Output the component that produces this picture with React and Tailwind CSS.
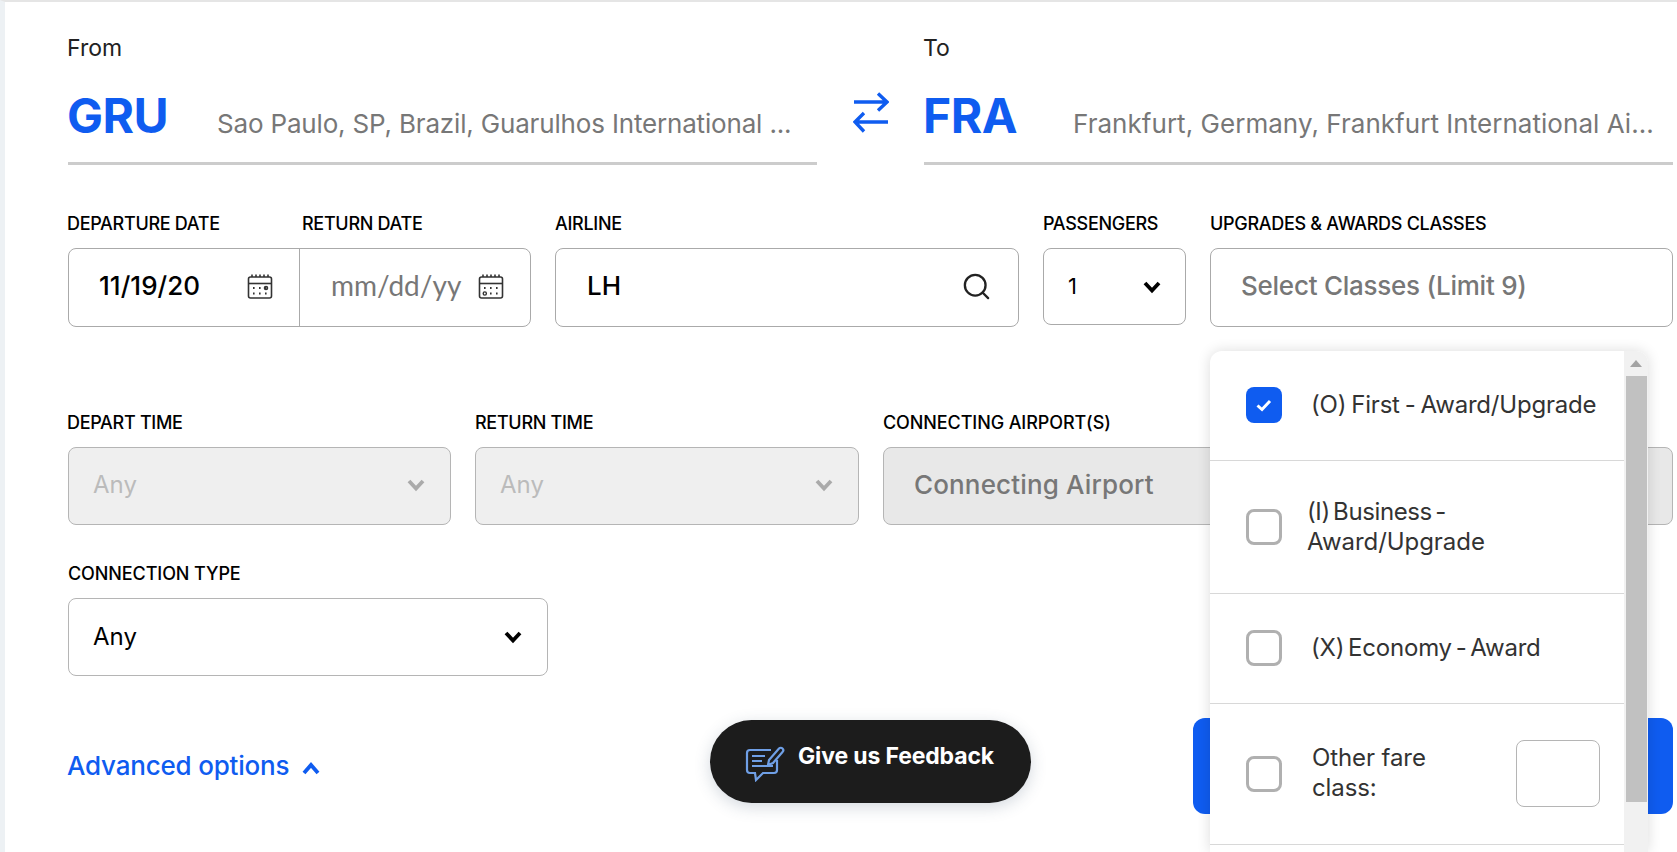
import { Search } from 'lucide-react'

function Chevron({ className = '', up = false }) {
  return (
    <svg width="18" height="14" viewBox="0 0 18 14" fill="none" className={className}>
      <path d={up ? 'M2 12L9 4L16 12' : 'M2 3L9 10.5L16 3'} stroke="currentColor" strokeWidth="3.8" />
    </svg>
  )
}

function CalendarIcon({ dot = 'right' }) {
  return (
    <svg width="26" height="26" viewBox="0 0 26 26" fill="none" stroke="#333" className="shrink-0">
      <rect x="1.5" y="4" width="23" height="21" rx="2" strokeWidth="1.6" />
      <path d="M1.5 10.5H24.5" strokeWidth="1.6" />
      <path d="M5 4V1.5M9 4V1.5M13 4V1.5M17 4V1.5M21 4V1.5" strokeWidth="1.6" />
      <path d="M6 15H7.6M12 15H13.6M18 15H19.6M12 20.5H13.6M18 20.5H19.6" strokeWidth="1.8" />
      {dot === 'right' ? (
        <>
          <path d="M6 20.5H7.6" strokeWidth="1.8" />
          <circle cx="19" cy="15" r="1.6" strokeWidth="1.4" />
        </>
      ) : (
        <circle cx="6.8" cy="20.5" r="1.6" strokeWidth="1.4" />
      )}
    </svg>
  )
}

function FieldLabel({ children, className = 'tracking-[-0.3px]' }) {
  return <div className={`h-6 text-[18px] leading-6 font-medium text-black whitespace-nowrap ${className}`}>{children}</div>
}

function AirportField({ label, code, name, nameClass, className }) {
  return (
    <div className={className}>
      <div className="h-6 text-[23px] leading-6 text-[#222] -ml-px">{label}</div>
      <div className="mt-8 h-[73px] flex items-baseline border-b-[3px] border-[#cccccc]">
        <span className="w-[150px] text-[48px] leading-[48px] font-bold text-[#0f5cf0] tracking-[-0.5px] -ml-px">{code}</span>
        <span className={`text-[26px] text-[#777777] whitespace-nowrap ${nameClass}`}>{name}</span>
      </div>
    </div>
  )
}

function ClassRow({ checked, textClass, className, children, extra }) {
  return (
    <div className={`flex items-center pl-9 border-b border-[#d8d8d8] ${className}`}>
      <div className={`w-9 h-9 shrink-0 rounded-lg flex items-center justify-center ${checked ? 'bg-[#0f5cf0]' : 'border-[3px] border-[#b0b0b0]'}`}>
        {checked && (
          <svg width="18" height="14" viewBox="0 0 18 14" fill="none">
            <path d="M2.5 7.5L7 11.5L15 3" stroke="white" strokeWidth="3" />
          </svg>
        )}
      </div>
      <div className={`text-[24px] leading-[30px] text-[#333333] ${textClass}`}>{children}</div>
      {extra}
    </div>
  )
}

export default function App() {
  return (
    <div className="relative h-[852px] overflow-hidden bg-white border-t-2 border-t-[#e5e5e5] border-l-[5px] border-l-[#edf1f4] pl-[63px] pr-1 pt-[34px] font-['Inter',sans-serif]">
      {/* From / To */}
      <div className="flex">
        <AirportField
          label="From"
          code="GRU"
          name="Sao Paulo, SP, Brazil, Guarulhos International ..."
          nameClass="tracking-[-0.17px]"
          className="w-[749px]"
        />
        <div className="w-[107px] flex justify-center pt-[56px]">
          <svg width="36" height="41" viewBox="0 0 36 41" fill="none" stroke="#0f5cf0" strokeWidth="3.4">
            <path d="M1 10H34M25 1.5L34 10L25 18.5" />
            <path d="M35 30H2M11 21L2 30L11 39.5" />
          </svg>
        </div>
        <AirportField
          label="To"
          code="FRA"
          name="Frankfurt, Germany, Frankfurt International Ai..."
          nameClass="tracking-[0.04px]"
          className="w-[749px]"
        />
      </div>

      {/* Dates, airline, passengers, classes */}
      <div className="mt-[47px] flex gap-6">
        <div className="w-[463px]">
          <div className="flex">
            <div className="w-[234px]"><FieldLabel className="-ml-px tracking-[-0.3px]">DEPARTURE DATE</FieldLabel></div>
            <FieldLabel>RETURN DATE</FieldLabel>
          </div>
          <div className="mt-3 h-[79px] flex border border-[#aaaaaa] rounded-lg">
            <div className="w-[231px] flex items-center justify-between pl-[30px] pr-[26px] pb-[3px] border-r border-[#aaaaaa]">
              <span className="text-[26px] font-medium text-black tracking-[0.05px] -mt-0.5">11/19/20</span>
              <CalendarIcon dot="right" />
            </div>
            <div className="flex-1 flex items-center justify-between pl-[31px] pr-[26px] pb-[3px]">
              <span className="text-[28px] font-['Lato',sans-serif] text-[#777777] -mt-0.5">mm/dd/yy</span>
              <CalendarIcon dot="left" />
            </div>
          </div>
        </div>

        <div className="w-[464px]">
          <FieldLabel>AIRLINE</FieldLabel>
          <div className="mt-3 h-[79px] flex items-center justify-between pl-[31px] pr-[26px] pb-[3px] border border-[#aaaaaa] rounded-lg">
            <span className="text-[26px] font-medium text-black -mt-0.5">LH</span>
            <Search size={31} strokeWidth={1.8} className="text-[#222]" />
          </div>
        </div>

        <div className="w-[143px]">
          <FieldLabel>PASSENGERS</FieldLabel>
          <div className="mt-3 h-[77px] flex items-center justify-between pl-6 pr-6 border border-[#aaaaaa] rounded-lg">
            <span className="text-[22px] text-black">1</span>
            <Chevron className="text-black" />
          </div>
        </div>

        <div className="w-[463px]">
          <FieldLabel>UPGRADES &amp; AWARDS CLASSES</FieldLabel>
          <div className="relative mt-3 h-[79px] flex items-center pl-[30px] pb-[5px] border border-[#aaaaaa] rounded-lg">
            <span className="text-[26px] font-medium text-[#777777] tracking-[-0.25px]">Select Classes (Limit 9)</span>

            {/* Open classes dropdown */}
            <div className="absolute z-10 left-[-1px] top-[102px] w-[438px] h-[501px] flex bg-white rounded-t-xl overflow-hidden shadow-[0_0_14px_rgba(0,0,0,0.14)]">
              <div className="flex-1 min-w-0">
                <ClassRow checked className="h-[110px] pb-px" textClass="ml-[29px] whitespace-nowrap tracking-[-0.2px] [word-spacing:-1.6px]">(O) First - Award/Upgrade</ClassRow>
                <ClassRow className="h-[133px]" textClass="ml-[25px] -mt-px">
                  <span className="tracking-[-0.4px] [word-spacing:-3px]">(I) Business -</span><br />
                  <span className="tracking-[-0.05px]">Award/Upgrade</span>
                </ClassRow>
                <ClassRow className="h-[110px] pb-0.5" textClass="ml-[29px] tracking-[-0.2px] [word-spacing:-2.8px]">(X) Economy - Award</ClassRow>
                <ClassRow
                  className="h-[141px]"
                  textClass="ml-[30px] -mt-0.5 tracking-[-0.1px]"
                  extra={<div className="ml-auto mr-6 mb-px w-[84px] h-[67px] border border-[#b5b5b5] rounded-lg" />}
                >
                  Other fare<br />class:
                </ClassRow>
              </div>
              <div className="w-6 bg-[#f1f1f1]">
                <div className="h-[25px] flex items-center justify-center">
                  <div className="w-0 h-0 border-x-[6px] border-x-transparent border-b-[7px] border-b-[#a3a3a3]" />
                </div>
                <div className="ml-0.5 mr-px h-[426px] bg-[#c1c1c1]" />
              </div>
            </div>
          </div>
        </div>
      </div>

      {/* Times and connecting airport */}
      <div className="mt-[84px] flex gap-6">
        <div className="w-[383px]">
          <FieldLabel className="-ml-px tracking-[-0.3px]">DEPART TIME</FieldLabel>
          <div className="mt-3 h-[78px] flex items-center justify-between pl-6 pr-[25px] pb-0.5 bg-[#efefef] border border-[#b5b5b5] rounded-lg">
            <span className="text-[24px] text-[#bbbbbb]">Any</span>
            <Chevron className="text-[#aaaaaa]" />
          </div>
        </div>
        <div className="w-[384px]">
          <FieldLabel>RETURN TIME</FieldLabel>
          <div className="mt-3 h-[78px] flex items-center justify-between pl-6 pr-[25px] pb-0.5 bg-[#efefef] border border-[#b5b5b5] rounded-lg">
            <span className="text-[24px] text-[#bbbbbb]">Any</span>
            <Chevron className="text-[#aaaaaa]" />
          </div>
        </div>
        <div className="w-[790px]">
          <FieldLabel className="tracking-[-0.1px]">CONNECTING AIRPORT(S)</FieldLabel>
          <div className="mt-3 h-[78px] flex items-center pl-[30px] pb-1 bg-[#e8e8e8] border border-[#b5b5b5] rounded-lg">
            <span className="text-[26px] font-medium text-[#777777] tracking-[0.15px]">Connecting Airport</span>
          </div>
        </div>
      </div>

      {/* Connection type */}
      <div className="mt-[37px] w-[480px]">
        <FieldLabel className="tracking-[-0.1px]">CONNECTION TYPE</FieldLabel>
        <div className="mt-3 h-[78px] flex items-center justify-between pl-6 pr-[25px] border border-[#b5b5b5] rounded-lg">
          <span className="text-[24px] text-black">Any</span>
          <Chevron className="text-black" />
        </div>
      </div>

      {/* Advanced options and search */}
      <div className="mt-[42px] flex items-center justify-between">
        <div className="flex items-center gap-[13px]">
          <span className="text-[26px] font-medium text-[#0f5cf0] tracking-[-0.2px] -ml-px -mt-0.5">Advanced options</span>
          <Chevron up className="text-[#0f5cf0] mt-1" />
        </div>
        <button className="w-[480px] h-[96px] bg-[#0f5cf0] rounded-xl" />
      </div>

      {/* Floating feedback button */}
      <div className="absolute z-20 left-[705px] top-[718px] w-[321px] h-[83px] pl-[35px] pb-2.5 flex items-center bg-[#1c1c1c] rounded-[42px] shadow-[0_4px_16px_rgba(60,80,110,0.22)]">
        <svg width="40" height="36" viewBox="0 0 40 36" fill="none" stroke="#6f9fe6" strokeWidth="2.2" className="shrink-0 mt-3.5">
          <path d="M26 4H5C3.3 4 2 5.3 2 7V24C2 25.7 3.3 27 5 27H10L11 34L18 27H29C30.7 27 32 25.7 32 24V14" />
          <path d="M7 10H20M7 15H17M7 20H28" />
          <path d="M23 19L24 14L34 2.5C35 1.5 36.5 1.5 37.5 2.5C38.5 3.5 38.5 5 37.5 6L28 17Z" />
        </svg>
        <span className="ml-[13px] text-[23px] font-bold text-white whitespace-nowrap tracking-[-0.15px]">Give us Feedback</span>
      </div>
    </div>
  )
}
